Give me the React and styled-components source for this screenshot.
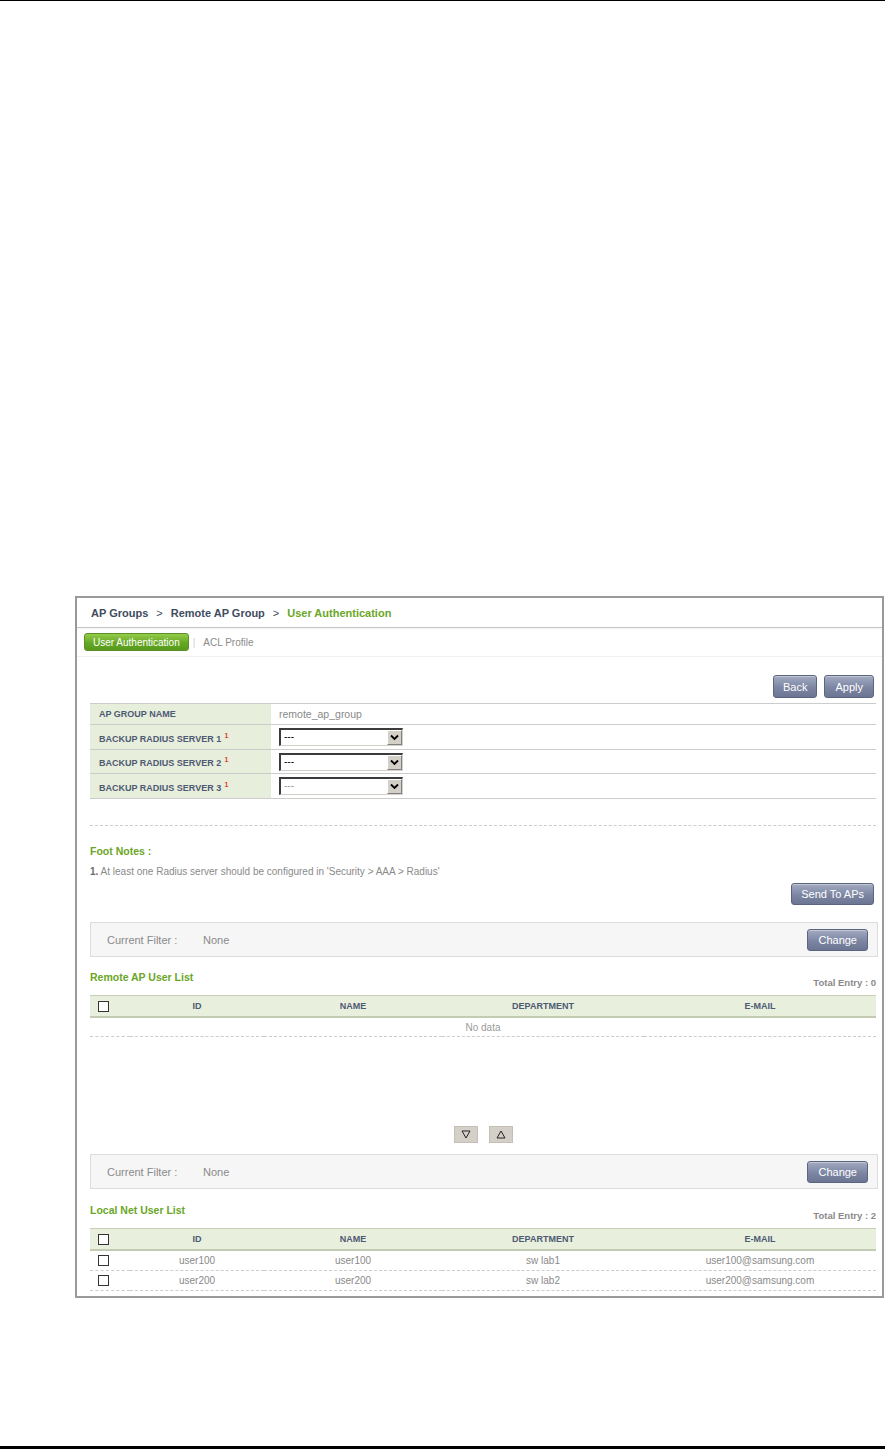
import React from 'react'
import styled, { createGlobalStyle } from 'styled-components'

const GlobalStyle = createGlobalStyle`
  html, body {
    margin: 0;
    padding: 0;
    background: #fff;
  }
  body {
    font-family: "Liberation Sans", Arial, sans-serif;
  }
`

const Page = styled.div`
  width: 885px;
  height: 1449px;
  box-sizing: border-box;
  border-top: 1px solid #000;
  border-bottom: 3px solid #000;
  display: flex;
  flex-direction: column;
`

const Panel = styled.div`
  box-sizing: border-box;
  width: 809px;
  margin: 595px 0 0 75px;
  border: 2px solid #9a9a9a;
  background: #fff;
`

const Breadcrumb = styled.div`
  height: 29px;
  display: flex;
  align-items: center;
  padding-left: 14px;
  border-bottom: 1px solid #c6c6c6;
  box-shadow: 0 1px 2px rgba(0, 0, 0, 0.05);
  font-size: 11px;
  font-weight: bold;
  color: #3f4c60;
`

const Crumb = styled.span`
  color: ${p => (p.$current ? '#6aa626' : '#3f4c60')};
`

const CrumbSep = styled.span`
  margin: 0 8px;
  font-weight: normal;
  color: #3f4c60;
`

const TabBar = styled.div`
  height: 28px;
  display: flex;
  align-items: center;
  padding-left: 7px;
  border-bottom: 1px solid #efefef;
  font-size: 10px;
`

const ActiveTab = styled.div`
  height: 18px;
  box-sizing: border-box;
  display: flex;
  align-items: center;
  padding: 0 8px;
  border: 1px solid #5a9126;
  border-radius: 3px;
  background: linear-gradient(#94cc4a, #66a825 55%, #579a1a);
  color: #fff;
`

const TabSep = styled.span`
  margin: 0 8px 0 4px;
  color: #d0d0d0;
`

const Tab = styled.span`
  color: #8a8a8a;
`

const Content = styled.div`
  padding: 0 6px 5px 13px;
`

const ButtonRow = styled.div`
  display: flex;
  justify-content: flex-end;
  gap: 7px;
  padding-right: 2px;
  margin-top: ${p => p.$top || 0}px;
`

const SlateButton = styled.button`
  height: ${p => p.$h || 23}px;
  box-sizing: border-box;
  padding: 0 ${p => p.$px || 11}px;
  border: 1px solid #5b6580;
  border-radius: 3px;
  background: linear-gradient(#a3abc2, #7c86a2 55%, #6c7693);
  box-shadow: inset 0 1px 0 rgba(255, 255, 255, 0.35);
  color: #fff;
  font-family: "Liberation Sans", Arial, sans-serif;
  font-size: 11px;
  cursor: pointer;
`

const FormTable = styled.table`
  width: 100%;
  margin-top: 5px;
  border-collapse: collapse;

  td {
    border-top: 1px solid #cccccc;
    border-bottom: 1px solid #cccccc;
    padding: 0;
  }
`

const LabelCell = styled.td`
  width: 181px;
  height: ${p => p.$h}px;
  box-sizing: border-box;
  padding-left: 9px !important;
  background: #e8eedc;
  font-size: 9px;
  font-weight: bold;
  color: #4d5a73;
`

const ValueCell = styled.td`
  padding-left: 8px !important;
  font-size: 10.5px;
  color: #8a8a8a;
`

const Sup = styled.sup`
  color: #e00000;
  font-size: 8px;
  font-weight: normal;
  margin-left: 3px;
  vertical-align: 4px;
`

const SelectBox = styled.div`
  width: 124px;
  height: 18px;
  box-sizing: border-box;
  display: flex;
  border-top: 2px solid #3c3c3c;
  border-left: 2px solid #3c3c3c;
  border-right: 1px solid #d4d0c8;
  border-bottom: 1px solid #d4d0c8;
  background: #fff;
`

const SelectText = styled.span`
  flex: 1;
  padding-left: 3px;
  font-size: 10px;
  line-height: 14px;
  color: ${p => (p.$disabled ? '#999' : '#000')};
`

const SelectArrow = styled.span`
  width: 15px;
  box-sizing: border-box;
  display: flex;
  align-items: center;
  justify-content: center;
  background: #d4d0c8;
  border-top: 1px solid #fff;
  border-left: 1px solid #fff;
  border-right: 1px solid #808080;
  border-bottom: 1px solid #808080;
`

const Divider = styled.div`
  margin-top: 26px;
  border-top: 1px dashed #cccccc;
`

const FootTitle = styled.div`
  margin-top: 18px;
  font-size: 10.5px;
  line-height: 14px;
  font-weight: bold;
  color: #6aa626;
`

const FootText = styled.div`
  margin-top: 7px;
  font-size: 10px;
  line-height: 14px;
  color: #8a8a8a;

  b {
    color: #6b6b6b;
  }
`

const FilterBox = styled.div`
  margin-top: ${p => p.$top}px;
  margin-right: -2px;
  height: 35px;
  box-sizing: border-box;
  display: flex;
  align-items: center;
  padding: 0 9px 0 16px;
  background: #f6f6f6;
  border: 1px solid #dcdcdc;
  font-size: 11px;
  color: #8a8a8a;
`

const FilterLabel = styled.span`
  width: 96px;
`

const FilterValue = styled.span`
  flex: 1;
`

const ListHead = styled.div`
  margin-top: ${p => p.$top}px;
  margin-bottom: 5px;
  height: 20px;
  display: flex;
  justify-content: space-between;
  align-items: flex-end;
`

const ListTitle = styled.div`
  align-self: flex-start;
  font-size: 10.5px;
  line-height: 14px;
  font-weight: bold;
  color: #6aa626;
`

const TotalEntry = styled.div`
  font-size: 9.5px;
  line-height: 14px;
  font-weight: bold;
  color: #8a8a8a;
`

const ListTable = styled.table`
  width: 100%;
  border-collapse: collapse;
  table-layout: fixed;

  th {
    height: 20px;
    padding: 0;
    background: #e9efdd;
    border-top: 1px solid #c6ceb6;
    border-bottom: 2px solid #c3cbb2;
    font-size: 9px;
    font-weight: bold;
    color: #4d5a73;
    text-align: center;
  }

  td {
    height: 19px;
    padding: 0;
    border-bottom: 1px dashed #cccccc;
    font-size: 10px;
    color: #8a8a8a;
    text-align: center;
  }

  th:first-child,
  td:first-child {
    text-align: left;
    padding-left: 8px;
  }
`

const NoData = styled.td`
  height: 18px !important;
  padding-left: 0 !important;
  text-align: center !important;
  color: #9a9a9a !important;
`

const Check = styled.span`
  display: inline-block;
  width: 11px;
  height: 11px;
  box-sizing: border-box;
  border: 1px solid #333;
  background: #fff;
  vertical-align: middle;
`

const Pager = styled.div`
  margin-top: 89px;
  display: flex;
  justify-content: center;
  gap: 11px;
`

const PagerButton = styled.span`
  width: 24px;
  height: 17px;
  box-sizing: border-box;
  display: flex;
  align-items: center;
  justify-content: center;
  background: #d4d0c8;
  border: 1px solid #c4c0b8;
`

const Chevron = () => (
  <svg width="9" height="7" viewBox="0 0 9 7">
    <path d="M1 1.5 L4.5 5 L8 1.5" fill="none" stroke="#000" strokeWidth="1.8" />
  </svg>
)

const Triangle = ({ up }) => (
  <svg width="10" height="9" viewBox="0 0 10 9">
    <path
      d={up ? 'M5 1 L9 8 L1 8 Z' : 'M1 1 L9 1 L5 8 Z'}
      fill="none"
      stroke="#222"
      strokeWidth="1"
    />
  </svg>
)

const Select = ({ disabled }) => (
  <SelectBox>
    <SelectText $disabled={disabled}>---</SelectText>
    <SelectArrow>
      <Chevron />
    </SelectArrow>
  </SelectBox>
)

const columns = [
  { key: 'check', width: 40 },
  { key: 'ID', width: 134 },
  { key: 'NAME', width: 178 },
  { key: 'DEPARTMENT', width: 202 },
  { key: 'E-MAIL' }
]

const UserTable = ({ rows }) => (
  <ListTable>
    <colgroup>
      {columns.map(c => (
        <col key={c.key} style={c.width ? { width: c.width } : undefined} />
      ))}
    </colgroup>
    <thead>
      <tr>
        <th><Check /></th>
        <th>ID</th>
        <th>NAME</th>
        <th>DEPARTMENT</th>
        <th>E-MAIL</th>
      </tr>
    </thead>
    <tbody>
      {rows.length === 0 ? (
        <tr>
          <NoData colSpan={5}>No data</NoData>
        </tr>
      ) : (
        rows.map(r => (
          <tr key={r.id}>
            <td><Check /></td>
            <td>{r.id}</td>
            <td>{r.name}</td>
            <td>{r.dept}</td>
            <td>{r.email}</td>
          </tr>
        ))
      )}
    </tbody>
  </ListTable>
)

const localUsers = [
  { id: 'user100', name: 'user100', dept: 'sw lab1', email: 'user100@samsung.com' },
  { id: 'user200', name: 'user200', dept: 'sw lab2', email: 'user200@samsung.com' }
]

const Filter = ({ top }) => (
  <FilterBox $top={top}>
    <FilterLabel>Current Filter :</FilterLabel>
    <FilterValue>None</FilterValue>
    <SlateButton $h={22} $px={10}>Change</SlateButton>
  </FilterBox>
)

const App = () => (
  <>
    <GlobalStyle />
    <Page>
      <Panel>
        <Breadcrumb>
          <Crumb>AP Groups</Crumb>
          <CrumbSep>&gt;</CrumbSep>
          <Crumb>Remote AP Group</Crumb>
          <CrumbSep>&gt;</CrumbSep>
          <Crumb $current>User Authentication</Crumb>
        </Breadcrumb>
        <TabBar>
          <ActiveTab>User Authentication</ActiveTab>
          <TabSep>|</TabSep>
          <Tab>ACL Profile</Tab>
        </TabBar>
        <Content>
          <ButtonRow $top={18}>
            <SlateButton $px={9}>Back</SlateButton>
            <SlateButton $px={10}>Apply</SlateButton>
          </ButtonRow>
          <FormTable>
            <tbody>
              <tr>
                <LabelCell $h={21}>AP GROUP NAME</LabelCell>
                <ValueCell>remote_ap_group</ValueCell>
              </tr>
              {[1, 2, 3].map(n => (
                <tr key={n}>
                  <LabelCell $h={n === 2 ? 24 : 25}>
                    BACKUP RADIUS SERVER {n}
                    <Sup>1</Sup>
                  </LabelCell>
                  <ValueCell>
                    <Select disabled={n === 3} />
                  </ValueCell>
                </tr>
              ))}
            </tbody>
          </FormTable>
          <Divider />
          <FootTitle>Foot Notes :</FootTitle>
          <FootText>
            <b>1.</b> At least one Radius server should be configured in 'Security &gt; AAA &gt; Radius'
          </FootText>
          <ButtonRow $top={4}>
            <SlateButton $h={22} $px={9}>Send To APs</SlateButton>
          </ButtonRow>
          <Filter top={17} />
          <ListHead $top={13}>
            <ListTitle>Remote AP User List</ListTitle>
            <TotalEntry>Total Entry : 0</TotalEntry>
          </ListHead>
          <UserTable rows={[]} />
          <Pager>
            <PagerButton><Triangle /></PagerButton>
            <PagerButton><Triangle up /></PagerButton>
          </Pager>
          <Filter top={11} />
          <ListHead $top={14}>
            <ListTitle>Local Net User List</ListTitle>
            <TotalEntry>Total Entry : 2</TotalEntry>
          </ListHead>
          <UserTable rows={localUsers} />
        </Content>
      </Panel>
    </Page>
  </>
)

export default App
